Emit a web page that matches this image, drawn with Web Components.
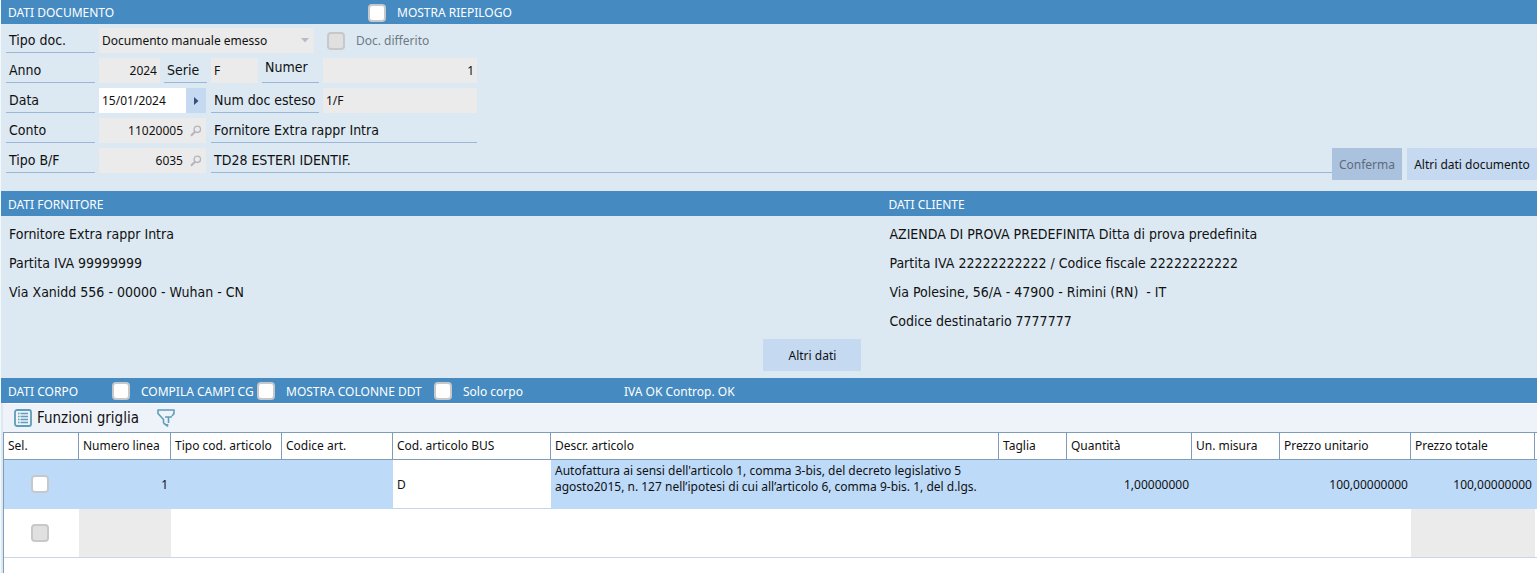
<!DOCTYPE html>
<html lang="it">
<head>
<meta charset="utf-8">
<title>Documento</title>
<style>
    body {
        --large: 14px "DejaVu Sans Condensed", "Noto Sans", sans-serif;
        margin: 0;
        background: #dce9f2;
        color: #111;
        font-family: "Noto Sans", "DejaVu Sans Condensed", sans-serif;
        font-size: 12px;
    }
</style>
</head>
<body>
<document-page></document-page>

<script>
// Icone condivise dai componenti
const ICONS = {
    lens: `<svg width="12" height="12" viewBox="0 0 12 12" fill="none" stroke="#b4b4bc" stroke-width="1.3"><circle cx="7.3" cy="4.3" r="3.2"/><path d="M5 6.8 1 10.8" stroke-width="2"/></svg>`,
    right: `<svg width="5" height="8" viewBox="0 0 5 8"><path d="M0 0 4.5 4 0 8z" fill="#34507c"/></svg>`,
    down: `<svg width="8" height="5" viewBox="0 0 8 5"><path d="M0 0h8L4 4.5z" fill="#b9bcc6"/></svg>`,
    list: `<svg width="18" height="18" viewBox="0 0 18 18" fill="none" stroke="#5f9dba"><rect x="1" y="1" width="16" height="16" rx="2" stroke-width="1.8"/><path d="M4 4.5h1.5M4 7.5h1.5M4 10.5h1.5M4 13.5h1.5M6.5 4.5H14M6.5 7.5H14M6.5 10.5H14M6.5 13.5H14" stroke-width="1.4"/></svg>`,
    funnel: `<svg width="18" height="18" viewBox="0 0 18 18" fill="none" stroke="#5f9dba" stroke-width="1.6" stroke-linejoin="round"><path d="M6.5 14V10.5L1 4.5V1h16v3.5L15 7M6.5 14l4 3v-2M8 8h7M11.5 8v6"/></svg>`
};

// Casella di spunta con etichetta
class CheckBox extends HTMLElement {
    connectedCallback() {
        this.attachShadow({ mode: 'open' }).innerHTML = `
            <style>
                :host { display: block; overflow: hidden; }
                label { display: flex; align-items: center; gap: 11px; white-space: nowrap; }
                input {
                    appearance: none;
                    flex: none;
                    box-sizing: border-box;
                    width: 18px;
                    height: 18px;
                    margin: 0;
                    border: 2px solid #c6c8ca;
                    border-radius: 4px;
                    background: #fff;
                }
                input:disabled { background: #e0e0e0; }
                :host([disabled]) { color: #6e7a84; }
            </style>
            <label>
                <input type="checkbox" ${this.hasAttribute('disabled') ? 'disabled' : ''} aria-label="${this.getAttribute('name') || this.textContent}">
                <slot></slot>
            </label>
        `;
    }
}
customElements.define('check-box', CheckBox);

// Pulsante piatto
class FlatButton extends HTMLElement {
    connectedCallback() {
        this.attachShadow({ mode: 'open' }).innerHTML = `
            <style>
                :host { display: block; }
                button {
                    width: 100%;
                    height: 32px;
                    padding: 0;
                    border: 0;
                    background: #c5d9f1;
                    color: inherit;
                    font: inherit;
                    white-space: nowrap;
                }
                button:disabled { background: #abc2de; color: #5d6b7c; }
            </style>
            <button type="button" ${this.hasAttribute('disabled') ? 'disabled' : ''}><slot></slot></button>
        `;
    }
}
customElements.define('flat-button', FlatButton);

// Barra blu con il titolo della sezione
class SectionBar extends HTMLElement {
    connectedCallback() {
        this.attachShadow({ mode: 'open' }).innerHTML = `
            <style>
                :host {
                    display: flex;
                    align-items: center;
                    box-sizing: border-box;
                    height: 25px;
                    padding: 1px 0 0 7px;
                    background: #458bc1;
                    color: #fff;
                }
            </style>
            <slot></slot>
        `;
    }
}
customElements.define('section-bar', SectionBar);

// Testo sottolineato a sola lettura
class LineText extends HTMLElement {
    connectedCallback() {
        this.attachShadow({ mode: 'open' }).innerHTML = `
            <style>
                :host {
                    display: block;
                    box-sizing: border-box;
                    height: 25px;
                    padding-left: 3px;
                    border-bottom: 1px solid #9bb7d8;
                    font: var(--large);
                    line-height: 25px;
                    white-space: nowrap;
                }
            </style>
            <slot></slot>
        `;
    }
}
customElements.define('line-text', LineText);

// Campo con etichetta: kind = text | select | date | search
class FormField extends HTMLElement {
    connectedCallback() {
        const kind = this.getAttribute('kind') || 'text';
        const label = this.getAttribute('label');
        const value = this.getAttribute('value');
        let control = `<input id="f" value="${value}" ${kind === 'date' ? '' : 'readonly'}>`;
        if (kind === 'select') {
            control = `<select id="f" disabled><option>${value}</option></select><span class="arrow">${ICONS.down}</span>`;
        }
        if (kind === 'date') {
            control += `<button type="button" aria-label="Calendario">${ICONS.right}</button>`;
        }
        if (kind === 'search') {
            control += `<button type="button" aria-label="Cerca">${ICONS.lens}</button>`;
        }
        this.attachShadow({ mode: 'open' }).innerHTML = `
            <style>
                :host { display: flex; gap: 4px; }
                label {
                    box-sizing: border-box;
                    width: var(--label, 89px);
                    height: 25px;
                    padding-left: 3px;
                    border-bottom: 1px solid #9bb7d8;
                    font: var(--large);
                    line-height: 25px;
                    white-space: nowrap;
                }
                :host([raised]) label { line-height: 18px; }
                .box {
                    display: grid;
                    grid-template-columns: 1fr auto;
                    width: var(--box, 107px);
                    height: 25px;
                    background: #ebebeb;
                }
                .date { background: #fff; }
                input, select {
                    appearance: none;
                    box-sizing: border-box;
                    min-width: 0;
                    width: 100%;
                    height: 25px;
                    margin: 0;
                    padding: 0 3px;
                    border: 0;
                    border-radius: 0;
                    outline: 0;
                    background: none;
                    color: #111;
                    font: inherit;
                    opacity: 1;
                }
                :host([right]) input { text-align: right; }
                select { grid-area: 1 / 1 / 2 / 3; }
                .arrow { grid-area: 1 / 2; display: flex; align-items: center; padding-right: 5px; }
                button {
                    display: flex;
                    align-items: center;
                    justify-content: center;
                    width: 20px;
                    padding: 0;
                    border: 0;
                    background: none;
                }
                .date button { background: #c5d9f1; }
            </style>
            <label for="f">${label}</label>
            <div class="box ${kind}">${control}</div>
        `;
    }
}
customElements.define('form-field', FormField);

// Griglia delle righe del corpo
class BodyGrid extends HTMLElement {
    connectedCallback() {
        this.attachShadow({ mode: 'open' }).innerHTML = `
            <style>
                :host { display: block; margin-left: 2px; border-top: 1px solid #fff; background: #fff; }
                .tools {
                    display: flex;
                    align-items: center;
                    gap: 18px;
                    height: 28px;
                    padding-left: 11px;
                    background: #eef2f9;
                }
                .tools button {
                    display: flex;
                    align-items: center;
                    gap: 5px;
                    padding: 0;
                    border: 0;
                    background: none;
                    color: inherit;
                    font: var(--large);
                    font-size: 15px;
                }
                .grid { border-left: 1px solid #7f9db9; min-height: 141px; }
                table { width: 100%; table-layout: fixed; border-collapse: separate; border-spacing: 0; }
                th, td { box-sizing: border-box; padding: 0 3px 0 4px; text-align: left; white-space: nowrap; overflow: hidden; }
                th {
                    height: 28px;
                    padding-bottom: 2px;
                    border: solid #7f9db9;
                    border-width: 1px 1px 1px 0;
                    font-weight: normal;
                }
                td { height: 49px; border-bottom: 1px solid #c3d8ec; }
                .on td { background: #bddaf9; border-color: #bddaf9; }
                .on td.edit { background: #fff; border-color: #c3d8ec; }
                td.n { text-align: right; }
                td.off { background: #ebebeb; }
                td.text { padding-top: 3px; line-height: 16px; vertical-align: top; white-space: normal; }
                td.sel { padding: 0 7px 0 4px; }
                check-box { width: 18px; margin: 0 auto; }
            </style>
            <div class="tools">
                <button type="button">${ICONS.list}Funzioni griglia</button>
                <button type="button" aria-label="Filtro">${ICONS.funnel}</button>
            </div>
            <div class="grid">
                <table>
                    <colgroup>
                        <col style="width:75px"><col style="width:92px"><col style="width:111px"><col style="width:111px">
                        <col style="width:158px"><col><col style="width:68px"><col style="width:125px">
                        <col style="width:88px"><col style="width:131px"><col style="width:124px"><col style="width:2px">
                    </colgroup>
                    <thead>
                        <tr>
                            <th>Sel.</th><th>Numero linea</th><th>Tipo cod. articolo</th><th>Codice art.</th>
                            <th>Cod. articolo BUS</th><th>Descr. articolo</th><th>Taglia</th><th>Quantità</th>
                            <th>Un. misura</th><th>Prezzo unitario</th><th>Prezzo totale</th><th style="border-right:0;padding:0"></th>
                        </tr>
                    </thead>
                    <tbody>
                        <tr class="on">
                            <td class="sel"><check-box name="Seleziona riga 1"></check-box></td><td class="n">1</td><td></td><td></td>
                            <td class="edit">D</td>
                            <td class="text">Autofattura ai sensi dell'articolo 1, comma 3-bis, del decreto legislativo 5<br>agosto2015, n. 127 nell’ipotesi di cui all’articolo 6, comma 9-bis. 1, del d.lgs.</td>
                            <td></td><td class="n">1,00000000</td><td></td><td class="n">100,00000000</td><td class="n">100,00000000</td><td style="padding:0"></td>
                        </tr>
                        <tr>
                            <td class="sel"><check-box name="Seleziona riga 2" disabled></check-box></td><td class="off"></td><td></td><td></td>
                            <td></td><td></td><td></td><td></td><td></td><td></td><td class="off"></td><td style="padding:0"></td>
                        </tr>
                    </tbody>
                </table>
            </div>
        `;
    }
}
customElements.define('body-grid', BodyGrid);

// Pagina completa del documento
class DocumentPage extends HTMLElement {
    connectedCallback() {
        this.attachShadow({ mode: 'open' }).innerHTML = `
            <style>
                :host { display: block; border-left: 1px solid #f4f8fb; }
                .first { height: 24px; }
                .title { width: 104px; white-space: nowrap; }
                .first .title { width: 360px; }
                .form { display: flex; flex-direction: column; gap: 5px; padding: 4px 0 11px 5px; }
                .row { display: flex; gap: 4px; }
                .wide { gap: 5px; }
                .row > check-box { align-self: center; margin-left: 9px; }
                .grow { flex: 1; }
                .parties { display: grid; grid-template-columns: 881fr 656fr; }
                .party { display: flex; flex-direction: column; }
                .party ul {
                    flex: 1;
                    min-height: 119px;
                    margin: 0;
                    padding: 4px 8px 0;
                    list-style: none;
                    font: var(--large);
                    line-height: 29px;
                    white-space: pre;
                }
                .party flat-button { align-self: flex-end; width: 98px; margin: 0 20px 7px 0; }
            </style>
            <section-bar class="first">
                <span class="title">DATI DOCUMENTO</span>
                <check-box>MOSTRA RIEPILOGO</check-box>
            </section-bar>
            <div class="form">
                <div class="row">
                    <form-field kind="select" label="Tipo doc." value="Documento manuale emesso" style="--box:215px"></form-field>
                    <check-box disabled>Doc. differito</check-box>
                </div>
                <div class="row">
                    <form-field label="Anno" value="2024" right style="--box:61px"></form-field>
                    <form-field label="Serie" value="F" style="--label:43px;--box:47px"></form-field>
                    <form-field label="Numer" value="1" right raised style="--label:57px;--box:154px"></form-field>
                </div>
                <div class="row wide">
                    <form-field kind="date" label="Data" value="15/01/2024"></form-field>
                    <form-field label="Num doc esteso" value="1/F" style="--label:108px;--box:154px"></form-field>
                </div>
                <div class="row wide">
                    <form-field kind="search" label="Conto" value="11020005" right></form-field>
                    <line-text style="width:266px">Fornitore Extra rappr Intra</line-text>
                </div>
                <div class="row wide">
                    <form-field kind="search" label="Tipo B/F" value="6035" right></form-field>
                    <line-text class="grow">TD28 ESTERI IDENTIF.</line-text>
                    <flat-button disabled style="width:70px;margin-left:-5px">Conferma</flat-button>
                    <flat-button style="width:130px">Altri dati documento</flat-button>
                </div>
            </div>
            <div class="parties">
                <div class="party">
                    <section-bar>DATI FORNITORE</section-bar>
                    <ul><li>Fornitore Extra rappr Intra</li><li>Partita IVA 99999999</li><li>Via Xanidd 556 - 00000 - Wuhan - CN</li></ul>
                    <flat-button>Altri dati</flat-button>
                </div>
                <div class="party">
                    <section-bar>DATI CLIENTE</section-bar>
                    <ul><li>AZIENDA DI PROVA PREDEFINITA Ditta di prova predefinita</li><li>Partita IVA 22222222222 / Codice fiscale 22222222222</li><li>Via Polesine, 56/A - 47900 - Rimini (RN)  - IT</li><li>Codice destinatario 7777777</li></ul>
                </div>
            </div>
            <section-bar>
                <span class="title">DATI CORPO</span>
                <check-box style="width:142px;margin-right:3px">COMPILA CAMPI CG</check-box>
                <check-box style="width:177px">MOSTRA COLONNE DDT</check-box>
                <check-box style="width:190px">Solo corpo</check-box>
                <span>IVA OK Controp. OK</span>
            </section-bar>
            <body-grid></body-grid>
        `;
    }
}
customElements.define('document-page', DocumentPage);
</script>
</body>
</html>
